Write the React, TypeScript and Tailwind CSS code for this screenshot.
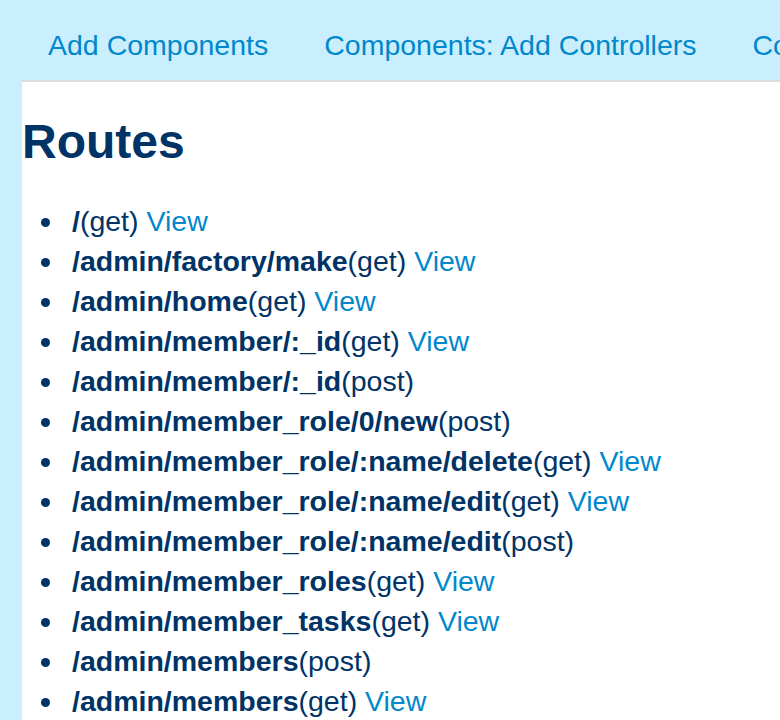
import React from 'react'

interface Route {
    path: string
    method: 'get' | 'post'
}

const routes: Route[] = [
    { path: '/', method: 'get' },
    { path: '/admin/factory/make', method: 'get' },
    { path: '/admin/home', method: 'get' },
    { path: '/admin/member/:_id', method: 'get' },
    { path: '/admin/member/:_id', method: 'post' },
    { path: '/admin/member_role/0/new', method: 'post' },
    { path: '/admin/member_role/:name/delete', method: 'get' },
    { path: '/admin/member_role/:name/edit', method: 'get' },
    { path: '/admin/member_role/:name/edit', method: 'post' },
    { path: '/admin/member_roles', method: 'get' },
    { path: '/admin/member_tasks', method: 'get' },
    { path: '/admin/members', method: 'post' },
    { path: '/admin/members', method: 'get' },
    { path: '/admin/members/new', method: 'get' },
]

const navLinks = [
    'Add Components',
    'Components: Add Controllers',
    'Components: Add Views',
]

const App = () => {
    return (
        <div
            className="min-h-screen bg-[#c9effe] overflow-hidden"
            style={{ fontFamily: '"Liberation Sans", Arial, sans-serif' }}
        >
            <nav className="h-20 pt-[29px] pl-[20px] flex whitespace-nowrap overflow-hidden">
                {navLinks.map((link) => (
                    <a
                        key={link}
                        href="#"
                        className="px-[28px] text-[28.5px] leading-[33px] text-[#0088cc] shrink-0"
                    >
                        {link}
                    </a>
                ))}
            </nav>

            <main className="ml-[22px] min-h-[640px] bg-white border-t-2 border-[#dddddd]">
                <h1 className="pt-[36px] text-[48px] leading-none font-bold text-[#003366]">
                    Routes
                </h1>
                <ul className="mt-[35px] pl-[19px] text-[28.5px] leading-[40px] text-[#003366]">
                    {routes.map((route, index) => (
                        <li
                            key={`${route.path}-${route.method}-${index}`}
                            className="flex items-center gap-[22px] whitespace-nowrap"
                        >
                            <span className="w-[9px] h-[9px] rounded-full bg-[#003366] shrink-0 mt-[2px]" />
                            <span>
                                <strong className="font-bold">{route.path}</strong>
                                ({route.method})
                                {route.method === 'get' && (
                                    <>
                                        {' '}
                                        <a href="#" className="text-[#0088cc]">
                                            View
                                        </a>
                                    </>
                                )}
                            </span>
                        </li>
                    ))}
                </ul>
            </main>
        </div>
    )
}

export default App
